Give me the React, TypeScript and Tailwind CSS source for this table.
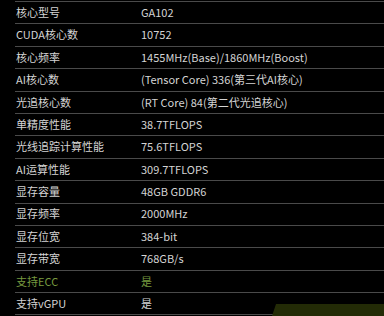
const specs: { label: string; value: string; highlight?: boolean }[] = [
  { label: "核心型号", value: "GA102" },
  { label: "CUDA核心数", value: "10752" },
  { label: "核心频率", value: "1455MHz(Base)/1860MHz(Boost)" },
  { label: "AI核心数", value: "(Tensor Core) 336(第三代AI核心)" },
  { label: "光追核心数", value: "(RT Core) 84(第二代光追核心)" },
  { label: "单精度性能", value: "38.7TFLOPS" },
  { label: "光线追踪计算性能", value: "75.6TFLOPS" },
  { label: "AI运算性能", value: "309.7TFLOPS" },
  { label: "显存容量", value: "48GB GDDR6" },
  { label: "显存频率", value: "2000MHz" },
  { label: "显存位宽", value: "384-bit" },
  { label: "显存带宽", value: "768GB/s" },
  { label: "支持ECC", value: "是", highlight: true },
  { label: "支持vGPU", value: "是" },
];

const App = () => {
  return (
    <div
      className="relative h-[316px] w-[384px] overflow-hidden bg-black text-[11px] text-[#d4d4d4]"
      style={{ fontFamily: '"Noto Sans CJK SC", "Noto Sans", sans-serif' }}
    >
      <div className="ml-[15px] mt-px border-t border-[#4a4a4a]">
        {specs.map((row) => (
          <div
            key={row.label}
            className={`flex h-[22.4px] items-center border-b border-[#4a4a4a] pb-px ${
              row.highlight ? "text-[#77993f]" : ""
            }`}
          >
            <div className="w-[126px] pl-px">{row.label}</div>
            <div>{row.value}</div>
          </div>
        ))}
      </div>
      <div className="absolute bottom-0 left-[272px] h-[12px] w-[112px] bg-[#232b06] [clip-path:polygon(4px_0,100%_0,100%_100%,0_100%)]" />
    </div>
  );
};

export default App;
